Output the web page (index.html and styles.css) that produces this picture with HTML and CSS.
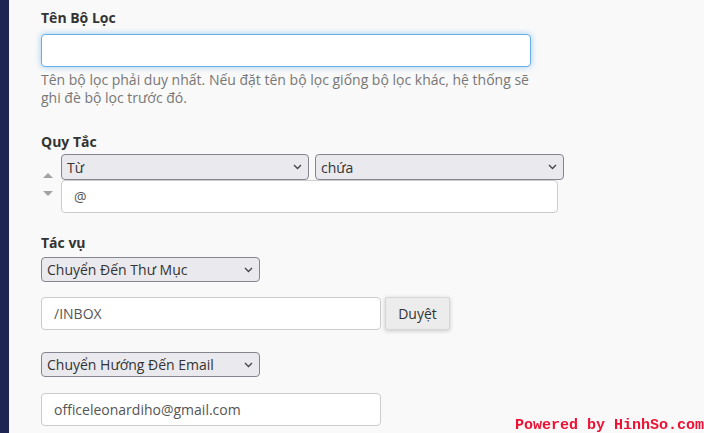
FILE: index.html
```html
<!DOCTYPE html>
<html lang="vi">
<head>
    <meta charset="UTF-8">
    <meta name="viewport" content="width=device-width, initial-scale=1.0">
    <title>Bộ Lọc Email</title>
    <link rel="stylesheet" href="styles.css">
</head>
<body>
    <div class="layout">
        <div class="sidebar"></div>

        <div class="main-content">
            <div class="section">
                <label class="field-label">Tên Bộ Lọc</label>
                <input type="text" class="text-input focused name-input" value="">
                <p class="help-text">Tên bộ lọc phải duy nhất. Nếu đặt tên bộ lọc giống bộ lọc khác, hệ thống sẽ ghi đè bộ lọc trước đó.</p>
            </div>

            <div class="section rules">
                <label class="field-label">Quy Tắc</label>
                <div class="rule-row">
                    <div class="sort-arrows">
                        <svg width="12" height="59" viewBox="0 0 12 59">
                            <path d="M1 24 L6 19 L11 24 Z" fill="#a3a3a3"/>
                            <path d="M1 37 L11 37 L6 42 Z" fill="#a3a3a3"/>
                        </svg>
                    </div>
                    <div class="rule-body">
                        <div class="rule-selects">
                            <div class="fake-select rule-field">
                                <span>Từ</span>
                                <svg class="chevron" width="9" height="6" viewBox="0 0 9 6"><path d="M1 1 L4.5 4.5 L8 1" fill="none" stroke="#444" stroke-width="1.3"/></svg>
                            </div>
                            <div class="fake-select rule-op">
                                <span>chứa</span>
                                <svg class="chevron" width="9" height="6" viewBox="0 0 9 6"><path d="M1 1 L4.5 4.5 L8 1" fill="none" stroke="#444" stroke-width="1.3"/></svg>
                            </div>
                        </div>
                        <input type="text" class="text-input rule-value" value="@">
                    </div>
                </div>
            </div>

            <div class="section actions">
                <label class="field-label">Tác vụ</label>
                <div class="fake-select action-select">
                    <span>Chuyển Đến Thư Mục</span>
                    <svg class="chevron" width="9" height="6" viewBox="0 0 9 6"><path d="M1 1 L4.5 4.5 L8 1" fill="none" stroke="#444" stroke-width="1.3"/></svg>
                </div>
                <div class="folder-row">
                    <input type="text" class="text-input action-input" value="/INBOX">
                    <button class="browse-btn">Duyệt</button>
                </div>
                <div class="fake-select action-select second">
                    <span>Chuyển Hướng Đến Email</span>
                    <svg class="chevron" width="9" height="6" viewBox="0 0 9 6"><path d="M1 1 L4.5 4.5 L8 1" fill="none" stroke="#444" stroke-width="1.3"/></svg>
                </div>
                <input type="text" class="text-input action-input email-input" value="officeleonardiho@gmail.com">
            </div>
        </div>
    </div>

    <div class="powered">Powered by HinhSo.com</div>
</body>
</html>
```

FILE: styles.css
```css
body {
    font-family: "Open Sans", Arial, sans-serif;
    margin: 0;
    padding: 0;
    background: #f9f9f9;
    color: #333;
    overflow: hidden;
}
.layout {
    display: flex;
    min-height: 100vh;
}
.sidebar {
    width: 9px;
    background: #1f2553;
    flex-shrink: 0;
}
.main-content {
    padding: 8px 0 0 32px;
}
.field-label {
    display: block;
    font-size: 14px;
    font-weight: 700;
    line-height: 20px;
    color: #333;
}
.text-input {
    display: block;
    box-sizing: border-box;
    height: 33px;
    padding: 0 12px;
    font-family: "Open Sans", Arial, sans-serif;
    font-size: 14px;
    color: #555;
    background: #fff;
    border: 1px solid #ccc;
    border-radius: 4px;
    outline: none;
}
.name-input {
    width: 490px;
    margin-top: 6px;
}
.text-input.focused {
    border-color: #66afe9;
    box-shadow: 0 0 6px rgba(102, 175, 233, 0.6);
}
.help-text {
    width: 490px;
    margin: 4px 0 0;
    font-size: 14px;
    line-height: 18px;
    color: #777;
}
.rules {
    margin-top: 25px;
}
.rule-row {
    display: flex;
    margin-top: 2px;
}
.sort-arrows {
    box-sizing: border-box;
    width: 20px;
    padding-left: 1px;
}
.rule-selects {
    display: flex;
    gap: 6px;
}
.fake-select {
    box-sizing: border-box;
    display: flex;
    align-items: center;
    justify-content: space-between;
    height: 26px;
    padding: 0 6px 0 5px;
    font-size: 14px;
    color: #333;
    background: #e9e9ee;
    border: 1px solid #85858f;
    border-radius: 4px;
}
.rule-field {
    width: 248px;
}
.rule-op {
    width: 249px;
}
.rule-value {
    width: 497px;
}
.actions {
    margin-top: 15px;
}
.action-select {
    width: 219px;
    height: 25px;
    margin-top: 4px;
}
.action-select.second {
    margin-top: 22px;
}
.folder-row {
    display: flex;
    gap: 4px;
    margin-top: 15px;
}
.action-input {
    width: 340px;
}
.email-input {
    margin-top: 16px;
}
.browse-btn {
    box-sizing: border-box;
    width: 65px;
    height: 33px;
    font-family: "Open Sans", Arial, sans-serif;
    font-size: 14px;
    color: #333;
    background: #ececec;
    border: 1px solid #d6d6d6;
    border-radius: 2px;
    box-shadow: 0 1px 4px rgba(0, 0, 0, 0.2);
    cursor: pointer;
}
.powered {
    position: fixed;
    right: 0;
    bottom: 0;
    line-height: 14px;
    font-family: "Liberation Mono", monospace;
    font-weight: 700;
    font-size: 15px;
    color: #ee1133;
}
```
